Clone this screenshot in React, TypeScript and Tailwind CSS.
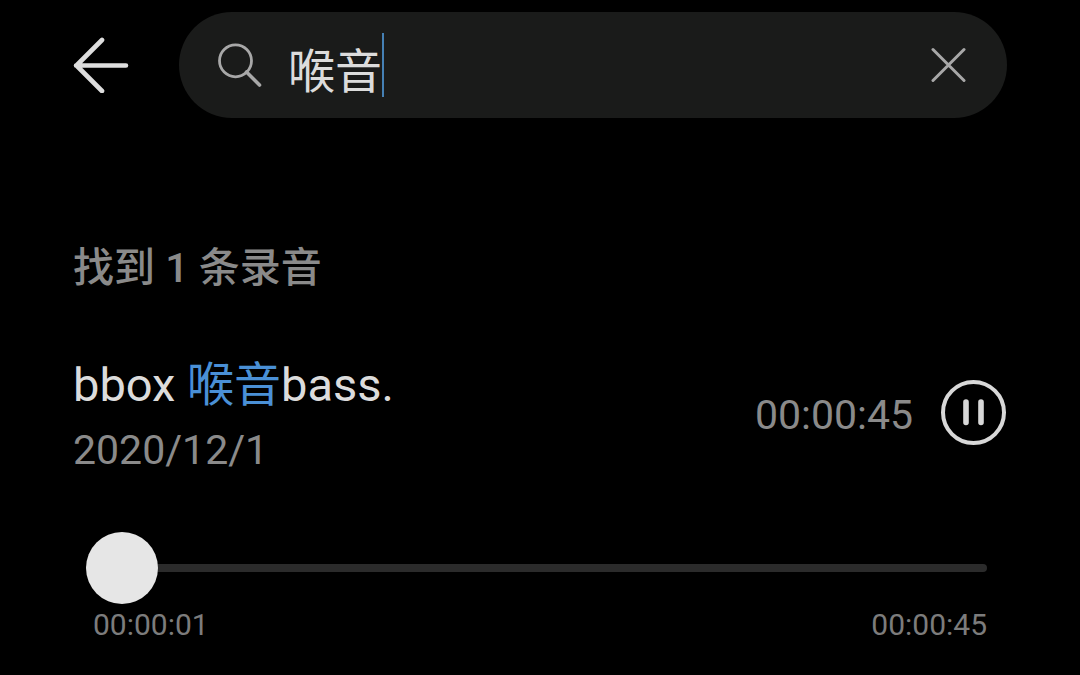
import React, { useState } from 'react';

interface Recording {
  id: string;
  before: string;
  match: string;
  after: string;
  date: string;
  seconds: number;
}

const recordings: Recording[] = [
  { id: 'rec-1', before: 'bbox ', match: '喉音', after: 'bass.', date: '2020/12/1', seconds: 45 },
];

const formatTime = (total: number) => {
  const pad = (n: number) => String(n).padStart(2, '0');
  return `${pad(Math.floor(total / 3600))}:${pad(Math.floor(total / 60) % 60)}:${pad(total % 60)}`;
};

const BackIcon = () => (
  <svg className="w-14 h-14" viewBox="0 0 56 56" fill="none" stroke="currentColor" strokeWidth="4.6" aria-hidden="true">
    <path d="M53 28.5H3M29 3L3.5 28.5L29 54" strokeLinecap="round" strokeLinejoin="round" />
  </svg>
);

const SearchIcon = () => (
  <svg className="w-11 h-11 shrink-0" viewBox="0 0 44 44" fill="none" stroke="currentColor" strokeWidth="2.8" aria-hidden="true">
    <circle cx="17.5" cy="17.8" r="16" />
    <path d="M28.5 29L41.5 42" strokeWidth="3.6" strokeLinecap="round" />
  </svg>
);

const ClearIcon = () => (
  <svg className="w-9 h-9" viewBox="0 0 36 36" fill="none" stroke="currentColor" strokeWidth="3" strokeLinecap="round" aria-hidden="true">
    <path d="M2 2.5L33 33.5M33 2.5L2 33.5" />
  </svg>
);

const PauseIcon = () => (
  <svg className="w-[66px] h-[66px]" viewBox="0 0 66 66" fill="none" stroke="currentColor" aria-hidden="true">
    <circle cx="32.5" cy="32.5" r="30.5" strokeWidth="4" />
    <path d="M25 22V42.5M40 22V42.5" strokeWidth="5.6" strokeLinecap="round" />
  </svg>
);

const PlayIcon = () => (
  <svg className="w-[66px] h-[66px]" viewBox="0 0 66 66" fill="none" stroke="currentColor" aria-hidden="true">
    <circle cx="32.5" cy="32.5" r="30.5" strokeWidth="4" />
    <path d="M27 21L45 32.5L27 44Z" fill="currentColor" strokeWidth="2" strokeLinejoin="round" />
  </svg>
);

const RecordingItem: React.FC<{ recording: Recording }> = ({ recording }) => {
  const [playing, setPlaying] = useState(true);
  const [position, setPosition] = useState(1);

  return (
    <li>
      <div className="flex items-center justify-between">
        <div>
          <h2 className="text-[47px] leading-[74px] text-[#dcdcdc]">
            {recording.before}
            <mark className="bg-transparent text-[#4a90d6]">{recording.match}</mark>
            {recording.after}
          </h2>
          <p className="text-[41px] leading-[56px] text-[#8a8a8a]">{recording.date}</p>
        </div>
        <div className="flex items-center gap-7">
          <span className="pt-1 text-[41px] leading-[56px] text-[#8a8a8a]">{formatTime(recording.seconds)}</span>
          <button type="button" aria-label={playing ? '暂停' : '播放'} onClick={() => setPlaying(!playing)} className="text-[#d8d8d8]">
            {playing ? <PauseIcon /> : <PlayIcon />}
          </button>
        </div>
      </div>

      {/* Playback progress */}
      <div className="mt-[54px] pl-[13px] pr-5">
        <input
          type="range"
          aria-label="播放进度"
          min={1}
          max={recording.seconds}
          value={position}
          onChange={e => setPosition(Number(e.target.value))}
          className="block w-full h-[72px] appearance-none bg-transparent outline-none [&::-webkit-slider-runnable-track]:h-2 [&::-webkit-slider-runnable-track]:rounded-full [&::-webkit-slider-runnable-track]:bg-[#2b2b2b] [&::-webkit-slider-thumb]:appearance-none [&::-webkit-slider-thumb]:w-[72px] [&::-webkit-slider-thumb]:h-[72px] [&::-webkit-slider-thumb]:-mt-8 [&::-webkit-slider-thumb]:rounded-full [&::-webkit-slider-thumb]:bg-[#e6e6e6]"
        />
        <div className="flex justify-between pt-px pl-[7px] text-[30px] leading-10 text-[#7c7c7c]">
          <span>{formatTime(position)}</span>
          <span>{formatTime(recording.seconds)}</span>
        </div>
      </div>
    </li>
  );
};

const App: React.FC = () => {
  const [query, setQuery] = useState('喉音');

  return (
    <div className="min-h-screen bg-black px-[73px] pt-3 font-['Roboto','Noto_Sans_CJK_SC',sans-serif]">
      <header className="flex items-center gap-[50px]">
        <button type="button" aria-label="返回" className="shrink-0 text-[#dedede]">
          <BackIcon />
        </button>
        <div className="flex flex-1 min-w-0 items-center h-[106px] rounded-full bg-[#1a1b1a] pl-[39px] pr-10">
          <span className="text-[#a8a8a8]"><SearchIcon /></span>
          <div className="flex flex-1 min-w-0 items-center ml-[26px]">
            <input
              type="text"
              aria-label="搜索录音"
              value={query}
              onChange={e => setQuery(e.target.value)}
              className="field-sizing-content min-w-0 h-16 pt-1 bg-transparent text-[47px] leading-[60px] text-[#dcdcdc] caret-transparent outline-none"
            />
            <span className="w-[2px] h-16 shrink-0 bg-[#4580b4]"></span>
          </div>
          <button type="button" aria-label="清除" onClick={() => setQuery('')} className="shrink-0 text-[#a8a8a8]">
            <ClearIcon />
          </button>
        </div>
      </header>

      <main>
        <p className="mt-[118px] text-[41px] leading-[64px] font-medium text-[#8a8a8a]">
          找到 {recordings.length} 条录音
        </p>
        <ul className="mt-12">
          {recordings.map(recording => (
            <RecordingItem key={recording.id} recording={recording} />
          ))}
        </ul>
      </main>
    </div>
  );
};

export default App;
